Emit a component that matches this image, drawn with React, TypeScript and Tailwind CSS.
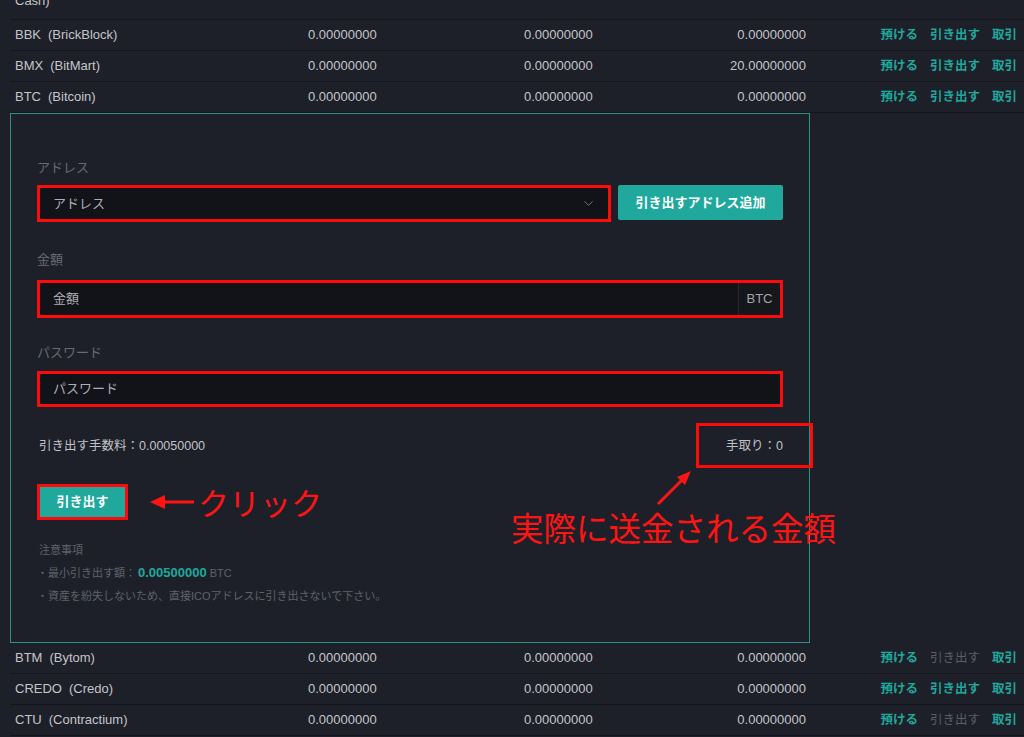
import { ChevronDown } from "lucide-react";

const FONT = { fontFamily: '"Liberation Sans", "Noto Sans CJK JP", sans-serif' };

type Row = { code: string; name: string; a: string; b: string; c: string; canWithdraw: boolean };

const topRows: Row[] = [
  { code: "BBK", name: "(BrickBlock)", a: "0.00000000", b: "0.00000000", c: "0.00000000", canWithdraw: true },
  { code: "BMX", name: "(BitMart)", a: "0.00000000", b: "0.00000000", c: "20.00000000", canWithdraw: true },
  { code: "BTC", name: "(Bitcoin)", a: "0.00000000", b: "0.00000000", c: "0.00000000", canWithdraw: true },
];

const bottomRows: Row[] = [
  { code: "BTM", name: "(Bytom)", a: "0.00000000", b: "0.00000000", c: "0.00000000", canWithdraw: false },
  { code: "CREDO", name: "(Credo)", a: "0.00000000", b: "0.00000000", c: "0.00000000", canWithdraw: true },
  { code: "CTU", name: "(Contractium)", a: "0.00000000", b: "0.00000000", c: "0.00000000", canWithdraw: false },
];

function AssetRow({ row }: { row: Row }) {
  return (
    <div className="flex h-[31px] items-center border-b border-[#15161d] text-[13px] text-[#c4c5c9]">
      <div className="w-[298px] pl-[5px] flex gap-[7px]">
        <span>{row.code}</span>
        <span>{row.name}</span>
      </div>
      <div className="w-[216px]">{row.a}</div>
      <div className="w-[282px] flex justify-between">
        <span>{row.b}</span>
        <span>{row.c}</span>
      </div>
      <div className="flex-1 flex justify-end gap-[12px] pr-[7px] text-[12.5px] font-semibold">
        <span className="text-[#1fa89c]">預ける</span>
        <span className={row.canWithdraw ? "text-[#1fa89c]" : "text-[#5b5e66] font-normal"}>引き出す</span>
        <span className="text-[#1fa89c]">取引</span>
      </div>
    </div>
  );
}

function WithdrawPanel() {
  return (
    <div className="relative h-[530px] w-[800px] border border-[#2b9186] pl-[26px] pr-[26px] pt-[45px]">
      <div className="text-[13px] leading-[18px] text-[#676a73]">アドレス</div>
      <div className="mt-[8px] flex gap-[7px]">
        <div className="flex h-[37px] w-[574px] items-center justify-between border-[3px] border-[#ff0a0a] bg-[#121319] pl-[13px] pr-[12px] text-[13px] text-[#adafb4]">
          <span>アドレス</span>
          <ChevronDown size={15} strokeWidth={1.3} className="text-[#8b8d94]" />
        </div>
        <button className="h-[35px] w-[165px] rounded-[2px] bg-[#20a89c] text-[13px] font-bold text-white">
          引き出すアドレス追加
        </button>
      </div>

      <div className="mt-[29px] text-[13px] leading-[18px] text-[#676a73]">金額</div>
      <div className="mt-[11px] flex h-[38px] w-[746px] items-stretch border-[3px] border-[#ff0a0a] bg-[#121319] text-[13px]">
        <div className="flex flex-1 items-center pl-[13px] text-[#adafb4]">金額</div>
        <div className="flex w-[42px] items-center justify-center border-l border-[#272931] bg-[#16171d] text-[#a3a5ab]">BTC</div>
      </div>

      <div className="mt-[26px] text-[13px] leading-[18px] text-[#676a73]">パスワード</div>
      <div className="mt-[9px] flex h-[36px] w-[746px] items-center border-[3px] border-[#ff0a0a] bg-[#121319] pl-[13px] text-[13px] text-[#adafb4]">
        パスワード
      </div>

      <div className="relative mt-[29px] flex h-[20px] w-[746px] items-center justify-between text-[12.5px] text-[#c0c2c6]">
        <span className="pl-[2px]">引き出す手数料：0.00050000</span>
        <span>手取り：0</span>
        <div className="pointer-events-none absolute left-[659px] top-[-13px] h-[45px] w-[117px] border-[3px] border-[#ff0a0a]" />
      </div>

      <div className="relative mt-[28px] flex items-center">
        <button className="h-[36px] w-[91px] border-[3px] border-[#ff0a0a] bg-[#20a89c] text-[13px] font-bold text-white">
          引き出す
        </button>
        <div className="ml-[22px] flex items-center text-[#ff1414]">
          <svg width="44" height="16" viewBox="0 0 44 16">
            <polygon points="0,8 15,1 15,15" fill="#ff1414" />
            <rect x="14" y="6.5" width="30" height="3" fill="#ff1414" />
          </svg>
          <span className="ml-[4px] text-[31px] leading-[36px]" style={{ fontFamily: '"Noto Sans CJK JP", sans-serif' }}>
            クリック
          </span>
        </div>
      </div>

      <div className="mt-[21px] text-[11px] leading-[18px] text-[#5f626b]">
        <div className="pl-[2px]">注意事項</div>
        <div className="mt-[5px] flex items-center">
          <span>・最小引き出す額：</span>
          <span className="ml-[2px] text-[13px] font-bold text-[#20a89c]">0.00500000</span>
          <span className="ml-[3px]">BTC</span>
        </div>
        <div className="mt-[5px]">・資産を紛失しないため、直接ICOアドレスに引き出さないで下さい。</div>
      </div>
    </div>
  );
}

export default function App() {
  return (
    <div className="relative h-[737px] w-[1024px] overflow-hidden bg-[#1e2029] pl-[10px]" style={FONT}>
      <div className="h-[20px] overflow-hidden border-b border-[#15161d] text-[13px] text-[#c4c5c9]">
        <div className="-mt-[8px] pl-[5px] leading-[18px]">Cash)</div>
      </div>
      {topRows.map((r) => (
        <AssetRow key={r.code} row={r} />
      ))}
      <WithdrawPanel />
      {bottomRows.map((r) => (
        <AssetRow key={r.code} row={r} />
      ))}

      {/* annotation: actual amount sent */}
      <svg className="pointer-events-none absolute left-[650px] top-[466px]" width="50" height="42" viewBox="0 0 50 42">
        <line x1="8" y1="38" x2="34" y2="12" stroke="#ff1414" strokeWidth="3" />
        <polygon points="41,5 27,11 35,19" fill="#ff1414" />
      </svg>
      <div
        className="pointer-events-none absolute left-[511px] top-[506px] text-[32.5px] leading-[42px] text-[#ff1414]"
        style={{ fontFamily: '"Noto Sans CJK JP", sans-serif' }}
      >
        実際に送金される金額
      </div>
    </div>
  );
}
